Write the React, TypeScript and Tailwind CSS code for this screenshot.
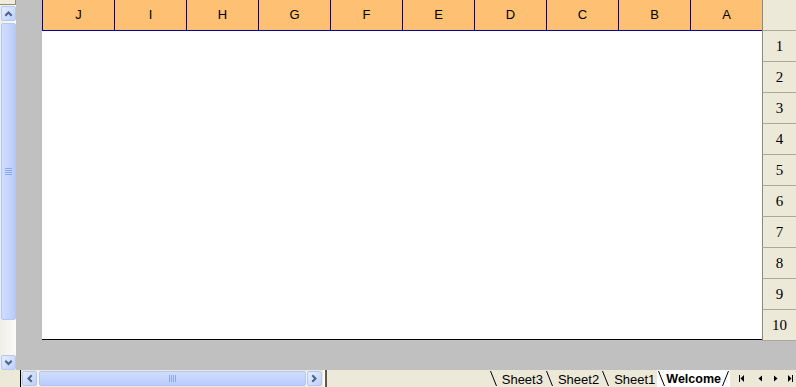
import React from "react";

const columns = ["J", "I", "H", "G", "F", "E", "D", "C", "B", "A"];
const rows = [1, 2, 3, 4, 5, 6, 7, 8, 9, 10];
const sheets = ["Sheet3", "Sheet2", "Sheet1"];

function Chevron({ dir }: { dir: "up" | "down" | "left" | "right" }) {
  const paths = {
    up: "M2 6 L4.5 3.5 L7 6",
    down: "M2 3.5 L4.5 6 L7 3.5",
    left: "M6 2 L3.5 4.5 L6 7",
    right: "M3 2 L5.5 4.5 L3 7",
  };
  return (
    <svg width="9" height="9" viewBox="0 0 9 9">
      <path d={paths[dir]} fill="none" stroke="#4d6185" strokeWidth="2" strokeLinecap="square" />
    </svg>
  );
}

function ScrollButton({ dir }: { dir: "up" | "down" | "left" | "right" }) {
  return (
    <div className="w-[15px] h-[15px] shrink-0 rounded-[2px] border border-[#b4c6f2] bg-gradient-to-br from-[#e6eefe] to-[#bdcffb] flex items-center justify-center">
      <Chevron dir={dir} />
    </div>
  );
}

function Grip({ vertical }: { vertical?: boolean }) {
  return (
    <div className={vertical ? "flex flex-col gap-[1px]" : "flex gap-[1px]"}>
      {[0, 1, 2, 3].map((i) => (
        <div
          key={i}
          className={vertical ? "w-[7px] h-[1px] bg-[#eef3fe] border-b border-[#8caaf0]" : "w-[1px] h-[7px] bg-[#8caaf0]"}
        />
      ))}
    </div>
  );
}

function Slash({ back = true }: { back?: boolean }) {
  return (
    <svg width="9" height="17" viewBox="0 0 9 17" className="shrink-0">
      {back ? (
        <line x1="1.5" y1="1" x2="7.5" y2="16" stroke="#000" strokeWidth="1" />
      ) : (
        <line x1="1.5" y1="16" x2="7.5" y2="1" stroke="#000" strokeWidth="1" />
      )}
    </svg>
  );
}

function NavIcon({ kind }: { kind: "first" | "prev" | "next" | "last" }) {
  return (
    <svg width="8" height="9" viewBox="0 0 8 9">
      {kind === "first" && (
        <>
          <rect x="1" y="1" width="1" height="7" fill="#000" />
          <path d="M6 1 L2.5 4.5 L6 8 Z" fill="#000" />
        </>
      )}
      {kind === "prev" && <path d="M6 1.5 L2.5 4.5 L6 7.5 Z" fill="#000" />}
      {kind === "next" && <path d="M2 1.5 L5.5 4.5 L2 7.5 Z" fill="#000" />}
      {kind === "last" && (
        <>
          <path d="M2 1 L5.5 4.5 L2 8 Z" fill="#000" />
          <rect x="6" y="1" width="1" height="7" fill="#000" />
        </>
      )}
    </svg>
  );
}

export default function App() {
  return (
    <div className="w-[796px] h-[387px] flex flex-col overflow-hidden bg-[#c0c0c0] font-['Liberation_Sans',Arial,sans-serif]">
      <div className="flex h-[370px]">
        {/* vertical scrollbar */}
        <div className="w-[16px] flex flex-col items-center bg-gradient-to-r from-[#efeee6] to-[#fbfbf8]">
          <div className="w-[16px] h-[5px] bg-[#efecdc] border-b border-r border-[#918e7c]" />
          <div className="mt-[1px]">
            <ScrollButton dir="up" />
          </div>
          <div className="mt-[2px] w-[15px] h-[297px] rounded-[2px] border border-[#b4c6f2] bg-gradient-to-r from-[#cfdcfd] via-[#c5d5fc] to-[#b9cbfa] flex items-center justify-center">
            <Grip vertical />
          </div>
          <div className="flex-1" />
          <ScrollButton dir="down" />
        </div>

        {/* sheet area */}
        <div className="flex-1 flex pl-[26px]">
          <div className="w-[720px] flex flex-col">
            <div className="h-[31px] flex bg-[#fec072] border-b border-[#0000a8]">
              {columns.map((c) => (
                <div
                  key={c}
                  className="w-[72px] border-l border-[#0000a8] flex items-center justify-center text-[13px] text-black"
                >
                  {c}
                </div>
              ))}
            </div>
            <div className="h-[309px] bg-white border-b border-black" />
          </div>
          <div className="w-[34px] flex flex-col">
            <div className="h-[31px] bg-[#ece9d8] border-l border-[#8c8a78] border-b border-b-[#aca899]" />
            {rows.map((r) => (
              <div
                key={r}
                className="h-[31px] bg-[#ece9d8] border-l border-[#8c8a78] border-b border-b-[#aca899] flex items-center justify-center text-[15px] text-black font-['Liberation_Serif','Times_New_Roman',serif]"
              >
                {r}
              </div>
            ))}
          </div>
        </div>
      </div>

      {/* bottom bar */}
      <div className="h-[17px] flex items-center bg-[#ece9d8]">
        <div className="w-[20px] h-full" />
        <div className="w-[1px] h-full bg-black" />
        <div className="w-[1px]" />
        <div className="flex items-center h-[15px] w-[300px] gap-[1px] bg-[#f5f4ef]">
          <ScrollButton dir="left" />
          <div className="flex-1 h-[15px] ml-[1px] rounded-[2px] border border-[#b4c6f2] bg-gradient-to-b from-[#cfdcfd] via-[#c5d5fc] to-[#b9cbfa] flex items-center justify-center">
            <Grip />
          </div>
          <ScrollButton dir="right" />
        </div>
        <div className="w-[2px] h-full bg-[#fbfbf7] ml-[1px]" />
        <div className="w-[2px] h-full bg-[#5b5a52]" />
        <div className="flex-1" />

        {/* sheet tabs */}
        <div className="flex items-center h-full text-[13px] text-black">
          {sheets.map((s) => (
            <div key={s} className="flex items-center h-full">
              <Slash />
              <span className="pl-[4px] pr-[2px] leading-[17px] pt-[1px]">{s}</span>
            </div>
          ))}
          <div className="flex items-center h-full bg-white">
            <Slash />
            <span className="pl-[0px] pr-[0px] leading-[17px] pt-[1px] font-bold text-[12.5px]">Welcome</span>
            <Slash back={false} />
          </div>
        </div>

        {/* tab navigation */}
        <div className="w-[66px] flex items-center h-full pl-[3px]">
          <div className="w-[18px] flex justify-center"><NavIcon kind="first" /></div>
          <div className="w-[17px] flex justify-center"><NavIcon kind="prev" /></div>
          <div className="w-[16px] flex justify-center"><NavIcon kind="next" /></div>
          <div className="w-[12px] flex justify-center"><NavIcon kind="last" /></div>
        </div>
      </div>
    </div>
  );
}
